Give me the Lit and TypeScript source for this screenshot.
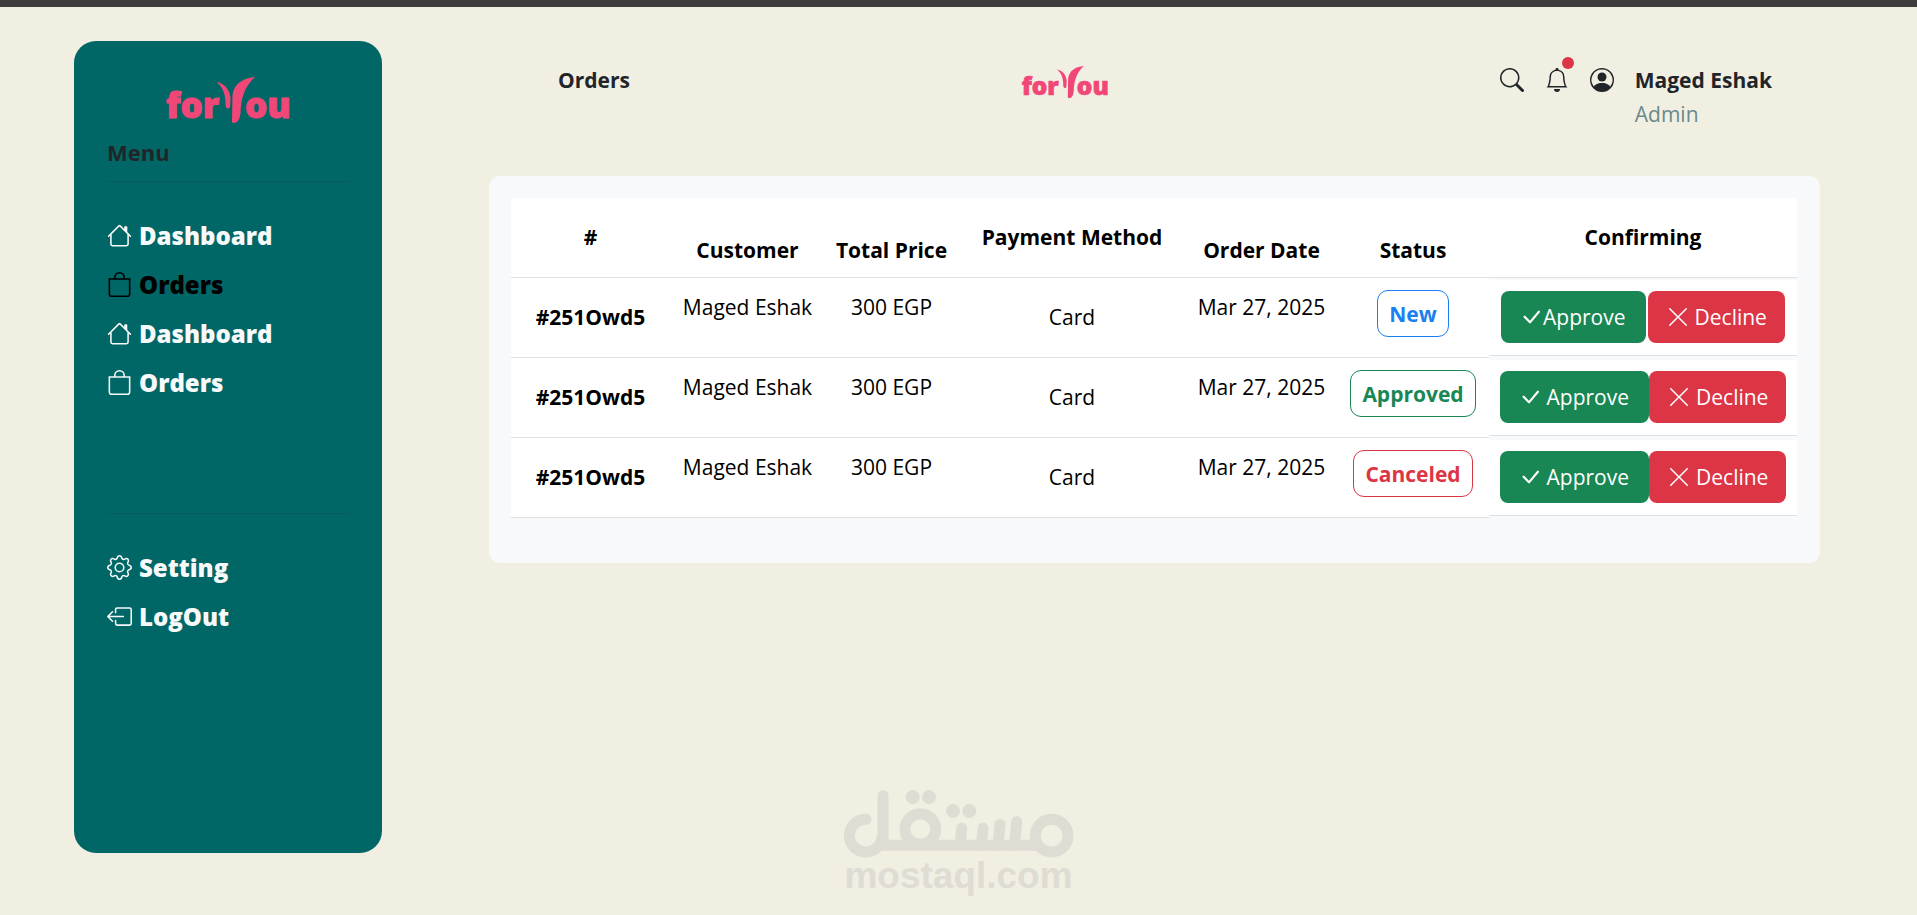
import { LitElement, html, css, svg } from "lit";
import { customElement, property } from "lit/decorators.js";
import { classMap } from "lit/directives/class-map.js";

const ICONS: Record<string, unknown> = {
  house: svg`<path d="M8.707 1.5a1 1 0 0 0-1.414 0L.646 8.146a.5.5 0 0 0 .708.708L2 8.207V13.5A1.5 1.5 0 0 0 3.5 15h9a1.5 1.5 0 0 0 1.5-1.5V8.207l.646.647a.5.5 0 0 0 .708-.708L13 5.793V2.5a.5.5 0 0 0-.5-.5h-1a.5.5 0 0 0-.5.5v1.293zM13 7.207V13.5a.5.5 0 0 1-.5.5h-9a.5.5 0 0 1-.5-.5V7.207l5-5z"/>`,
  bag: svg`<path d="M8 1a2.5 2.5 0 0 1 2.5 2.5V4h-5v-.5A2.5 2.5 0 0 1 8 1m3.5 3v-.5a3.5 3.5 0 1 0-7 0V4H1v10a2 2 0 0 0 2 2h10a2 2 0 0 0 2-2V4zM2 5h12v9a1 1 0 0 1-1 1H3a1 1 0 0 1-1-1z"/>`,
  gear: svg`<path d="M8 4.754a3.246 3.246 0 1 0 0 6.492 3.246 3.246 0 0 0 0-6.492M5.754 8a2.246 2.246 0 1 1 4.492 0 2.246 2.246 0 0 1-4.492 0"/><path d="M9.796 1.343c-.527-1.79-3.065-1.79-3.592 0l-.094.319a.873.873 0 0 1-1.255.52l-.292-.16c-1.64-.892-3.433.902-2.54 2.541l.159.292a.873.873 0 0 1-.52 1.255l-.319.094c-1.79.527-1.79 3.065 0 3.592l.319.094a.873.873 0 0 1 .52 1.255l-.16.292c-.892 1.64.901 3.434 2.541 2.54l.292-.159a.873.873 0 0 1 1.255.52l.094.319c.527 1.79 3.065 1.79 3.592 0l.094-.319a.873.873 0 0 1 1.255-.52l.292.16c1.64.893 3.434-.902 2.54-2.541l-.159-.292a.873.873 0 0 1 .52-1.255l.319-.094c1.79-.527 1.79-3.065 0-3.592l-.319-.094a.873.873 0 0 1-.52-1.255l.16-.292c.893-1.64-.902-3.433-2.541-2.54l-.292.159a.873.873 0 0 1-1.255-.52zm-2.633.283c.246-.835 1.428-.835 1.674 0l.094.319a1.873 1.873 0 0 0 2.693 1.115l.291-.16c.764-.415 1.6.42 1.184 1.185l-.159.292a1.873 1.873 0 0 0 1.116 2.692l.318.094c.835.246.835 1.428 0 1.674l-.319.094a1.873 1.873 0 0 0-1.115 2.693l.16.291c.415.764-.42 1.6-1.185 1.184l-.291-.159a1.873 1.873 0 0 0-2.693 1.116l-.094.318c-.246.835-1.428.835-1.674 0l-.094-.319a1.873 1.873 0 0 0-2.692-1.115l-.292.16c-.764.415-1.6-.42-1.184-1.185l.159-.291A1.873 1.873 0 0 0 1.945 8.93l-.319-.094c-.835-.246-.835-1.428 0-1.674l.319-.094A1.873 1.873 0 0 0 3.06 4.377l-.16-.292c-.415-.764.42-1.6 1.185-1.184l.292.159a1.873 1.873 0 0 0 2.692-1.115z"/>`,
  logout: svg`<path fill-rule="evenodd" d="M6 12.5a.5.5 0 0 0 .5.5h8a.5.5 0 0 0 .5-.5v-9a.5.5 0 0 0-.5-.5h-8a.5.5 0 0 0-.5.5v2a.5.5 0 0 1-1 0v-2A1.5 1.5 0 0 1 6.5 2h8A1.5 1.5 0 0 1 16 3.5v9a1.5 1.5 0 0 1-1.5 1.5h-8A1.5 1.5 0 0 1 5 12.5v-2a.5.5 0 0 1 1 0z"/><path fill-rule="evenodd" d="M.146 8.354a.5.5 0 0 1 0-.708l3-3a.5.5 0 1 1 .708.708L1.707 7.5H10.5a.5.5 0 0 1 0 1H1.707l2.147 2.146a.5.5 0 0 1-.708.708z"/>`,
  search: svg`<path d="M11.742 10.344a6.5 6.5 0 1 0-1.397 1.398h-.001q.044.06.098.115l3.85 3.85a1 1 0 0 0 1.415-1.414l-3.85-3.85a1 1 0 0 0-.115-.1zM12 6.5a5.5 5.5 0 1 1-11 0 5.5 5.5 0 0 1 11 0"/>`,
  bell: svg`<path d="M8 16a2 2 0 0 0 2-2H6a2 2 0 0 0 2 2M8 1.918l-.797.161A4 4 0 0 0 4 6c0 .628-.134 2.197-.459 3.742-.16.767-.376 1.566-.663 2.258h10.244c-.287-.692-.502-1.49-.663-2.258C12.134 8.197 12 6.628 12 6a4 4 0 0 0-3.203-3.92zM14.22 12c.223.447.481.801.78 1H1c.299-.199.557-.553.78-1C2.68 10.2 3 6.88 3 6c0-2.42 1.72-4.44 4.005-4.901a1 1 0 1 1 1.99 0A5 5 0 0 1 13 6c0 .88.32 4.2 1.22 6"/>`,
  person: svg`<path d="M11 6a3 3 0 1 1-6 0 3 3 0 0 1 6 0"/><path fill-rule="evenodd" d="M0 8a8 8 0 1 1 16 0A8 8 0 0 1 0 8m8-7a7 7 0 0 0-5.468 11.37C3.242 11.226 4.805 10 8 10s4.757 1.225 5.468 2.37A7 7 0 0 0 8 1"/>`,
  check: svg`<path d="M12.736 3.97a.733.733 0 0 1 1.047 0c.286.289.29.756.01 1.05L7.88 12.01a.733.733 0 0 1-1.065.02L3.217 8.384a.757.757 0 0 1 0-1.06.733.733 0 0 1 1.047 0l3.052 3.093 5.4-6.425z"/>`,
  cross: svg`<path d="M2.146 2.854a.5.5 0 1 1 .708-.708L8 7.293l5.146-5.147a.5.5 0 0 1 .708.708L8.707 8l5.147 5.146a.5.5 0 0 1-.708.708L8 8.707l-5.146 5.147a.5.5 0 0 1-.708-.708L7.293 8z"/>`,
};

const icon = (name: string) =>
  html`<svg class="icon" viewBox="0 0 16 16" fill="currentColor" aria-hidden="true">${ICONS[name]}</svg>`;

@customElement("brand-logo")
export class BrandLogo extends LitElement {
  static styles = css`
    :host { display: block; }
    .mark { display: block; width: 100%; overflow: visible; fill: #f14778; stroke: #f14778; stroke-linejoin: round; }
    .word { font: 800 35px "Open Sans", sans-serif; stroke-width: 1; }
    .leaf { stroke-width: 0; }
  `;
  render() {
    return html`<svg class="mark" viewBox="0 0 126 52" role="img" aria-label="forYou">
      <text class="word" x="1" y="41">for</text>
      <text class="word" x="80" y="41">ou</text>
      <path class="leaf" d="M51.500 5C59 6 64.500 12 65.500 21L65 30Q62.500 34 60.500 29C61 18 58 10 51.500 5Z" />
      <path class="leaf" d="M90 0C79 1 69 6 67.500 18L67 43Q66.500 46.500 69 46C74 45.500 75 40 75.500 36C76 22 79 10 90 0Z" />
    </svg>`;
  }
}

@customElement("site-watermark")
export class SiteWatermark extends LitElement {
  static styles = css`
    :host { display: flex; flex-direction: column; align-items: center; color: #dfdcd4; }
    .mark { width: 232px; fill: none; stroke: currentColor; stroke-width: 33; stroke-linecap: round; }
    .dots { fill: currentColor; stroke: none; }
    .domain { font: 700 37px/36px "Liberation Sans", sans-serif; }
  `;
  render() {
    return html`
      <svg class="mark" viewBox="66 30 696 208" aria-hidden="true">
        <circle cx="692" cy="170" r="49" />
        <circle cx="298" cy="150" r="46" />
        <path d="M650 199H186V50M135 121A49 49 0 1 0 183 175" />
        <path d="M587 128L580 199M537 136L531 199M486 148L481 199M422 148L417 199" />
        <g class="dots">
          <circle cx="275" cy="54" r="21" /><circle cx="324" cy="54" r="21" />
          <circle cx="396" cy="96" r="21" /><circle cx="445" cy="96" r="21" />
        </g>
      </svg>
      <span class="domain">mostaql.com</span>
    `;
  }
}

interface NavItem { icon: string; label: string; active?: boolean }

@customElement("side-menu")
export class SideMenu extends LitElement {
  static styles = css`
    :host {
      display: block; box-sizing: border-box; padding: 36px 33px;
      background: #006766; border-radius: 22px; color: #212529;
    }
    .logo { width: 126px; margin: 0 auto; }
    .title { margin: 6px 0 0; font-size: 22px; line-height: 34px; font-weight: 700; }
    .rule { margin: 12px 0 0; border: 0; border-top: 1px solid #085b5b; }
    .list { list-style: none; margin: 0; padding: 29px 0 0; }
    .first { min-height: 290px; }
    .link {
      display: flex; align-items: center; gap: 7px; height: 49px;
      color: #f8f9fa; font-size: 24px; font-weight: 800; text-decoration: none;
    }
    .active { color: #000; }
    .icon { width: 25px; height: 25px; flex: none; }
  `;
  private main: NavItem[] = [
    { icon: "house", label: "Dashboard" },
    { icon: "bag", label: "Orders", active: true },
    { icon: "house", label: "Dashboard" },
    { icon: "bag", label: "Orders" },
  ];
  private extra: NavItem[] = [
    { icon: "gear", label: "Setting" },
    { icon: "logout", label: "LogOut" },
  ];
  private item(i: NavItem) {
    return html`<li><a href="#" class=${classMap({ link: true, active: !!i.active })}>${icon(i.icon)}<span>${i.label}</span></a></li>`;
  }
  render() {
    return html`
      <brand-logo class="logo"></brand-logo>
      <h2 class="title">Menu</h2>
      <hr class="rule" />
      <nav>
        <ul class="list first">${this.main.map((i) => this.item(i))}</ul>
        <hr class="rule" />
        <ul class="list">${this.extra.map((i) => this.item(i))}</ul>
      </nav>
    `;
  }
}

@customElement("top-header")
export class TopHeader extends LitElement {
  static styles = css`
    :host {
      display: flex; justify-content: space-between; align-items: flex-start;
      padding: 22px 48px 0 69px; color: #212529;
    }
    .title { margin: 0; font-size: 21px; line-height: 34px; font-weight: 700; }
    .logo { width: 88px; margin-top: 3px; }
    .tools { display: flex; align-items: flex-start; gap: 21px; }
    .tool {
      position: relative; display: flex; padding: 5px 0; border: 0; background: none; color: inherit;
    }
    .icon { width: 24px; height: 24px; }
    .badge {
      position: absolute; top: -6px; right: -5px; width: 12px; height: 12px;
      border-radius: 50%; background: #dc3545;
    }
    .user { font-size: 21px; line-height: 34px; }
    .name { margin: 0; font-weight: 700; font-size: inherit; }
    .role { margin: 0; color: #6b898b; }
  `;
  render() {
    return html`
      <h1 class="title">Orders</h1>
      <brand-logo class="logo"></brand-logo>
      <div class="tools">
        <button class="tool" aria-label="Search">${icon("search")}</button>
        <button class="tool" aria-label="Notifications">${icon("bell")}<span class="badge"></span></button>
        <button class="tool" aria-label="Account">${icon("person")}</button>
        <div class="user">
          <p class="name">Maged Eshak</p>
          <p class="role">Admin</p>
        </div>
      </div>
    `;
  }
}

interface Order {
  id: string; customer: string; total: string; method: string; date: string;
  status: "New" | "Approved" | "Canceled";
}

@customElement("orders-table")
export class OrdersTable extends LitElement {
  @property({ attribute: false }) orders: Order[] = [];

  static styles = css`
    :host { display: block; padding: 22px 23px 45px 22px; background: #f8f9fb; border-radius: 11px; color: #000; }
    .table {
      width: 100%; table-layout: fixed; border-collapse: separate; border-spacing: 0;
      font-size: 21px; line-height: 34px; text-align: center;
    }
    .c1 { width: 159px; } .c2 { width: 155px; } .c3 { width: 133px; } .c4 { width: 228px; }
    .c5 { width: 151px; } .c6 { width: 152px; } .c7 { width: 308px; }
    .cell {
      box-sizing: border-box; height: 80px; padding: 10px 0 12px; background: #fff;
      border-bottom: 1px solid #dee2e6; vertical-align: middle; white-space: nowrap;
    }
    .top { vertical-align: top; padding: 12px 0 10px; }
    .bottom { vertical-align: bottom; padding: 12px 0 10px; }
    .slot { padding: 0; vertical-align: middle; }
    .actions {
      box-sizing: border-box; display: flex; justify-content: center; align-items: flex-start;
      height: 76px; padding: 11px 0; background: #fff; border-bottom: 1px solid #dee2e6;
    }
    .spaced { gap: 2px; }
    .btn {
      display: flex; align-items: center; gap: 5px; height: 52px; padding: 0 18px; border: 0;
      border-radius: 8px; color: #fff; font: inherit; white-space: nowrap;
    }
    .approve { background: #198754; padding-right: 20px; }
    .tight { gap: 0; }
    .decline { background: #dc3545; }
    .icon { width: 24px; height: 24px; flex: none; }
    .pill {
      display: inline-block; box-sizing: border-box; height: 47px; padding: 6px 11px;
      border: 1px solid; border-radius: 11px; font-weight: 700;
    }
    .new { color: #1a7ff0; }
    .approved { color: #198754; }
    .canceled { color: #dc3545; }
  `;

  render() {
    return html`
      <table class="table">
        <colgroup>
          <col class="c1" /><col class="c2" /><col class="c3" /><col class="c4" /><col class="c5" /><col class="c6" /><col class="c7" />
        </colgroup>
        <thead>
          <tr>
            <th class="cell" scope="col">#</th>
            <th class="cell bottom" scope="col">Customer</th>
            <th class="cell bottom" scope="col">Total Price</th>
            <th class="cell" scope="col">Payment Method</th>
            <th class="cell bottom" scope="col">Order Date</th>
            <th class="cell bottom" scope="col">Status</th>
            <th class="cell" scope="col">Confirming</th>
          </tr>
        </thead>
        <tbody>
          ${this.orders.map((o) => {
            const fresh = o.status === "New";
            return html`<tr>
              <th class="cell" scope="row">${o.id}</th>
              <td class="cell top">${o.customer}</td>
              <td class="cell top">${o.total}</td>
              <td class="cell">${o.method}</td>
              <td class="cell top">${o.date}</td>
              <td class="cell top"><span class="pill ${o.status.toLowerCase()}">${o.status}</span></td>
              <td class="slot">
                <div class=${classMap({ actions: true, spaced: fresh })}>
                  <button class=${classMap({ btn: true, approve: true, tight: fresh })}>${icon("check")}Approve</button>
                  <button class="btn decline">${icon("cross")}Decline</button>
                </div>
              </td>
            </tr>`;
          })}
        </tbody>
      </table>
    `;
  }
}

@customElement("app-root")
export class AppRoot extends LitElement {
  static styles = css`
    :host {
      display: block; position: relative; box-sizing: border-box; min-height: 100vh;
      background: #f1efe2; border-top: 7px solid #3e3c3d;
      font-family: "Open Sans", "Noto Sans", sans-serif;
    }
    .page {
      display: grid; grid-template-columns: 308px minmax(0, 1fr); gap: 107px;
      box-sizing: border-box; min-height: calc(100vh - 7px); padding: 34px 97px 62px 74px;
    }
    .main { display: flex; flex-direction: column; gap: 45px; }
    .watermark { position: absolute; left: 0; right: 0; bottom: 21px; pointer-events: none; }
  `;
  private orders: Order[] = (["New", "Approved", "Canceled"] as const).map((status) => ({
    id: "#251Owd5", customer: "Maged Eshak", total: "300 EGP", method: "Card", date: "Mar 27, 2025", status,
  }));
  render() {
    return html`
      <div class="page">
        <side-menu></side-menu>
        <main class="main">
          <top-header></top-header>
          <orders-table .orders=${this.orders}></orders-table>
        </main>
      </div>
      <site-watermark class="watermark"></site-watermark>
    `;
  }
}
